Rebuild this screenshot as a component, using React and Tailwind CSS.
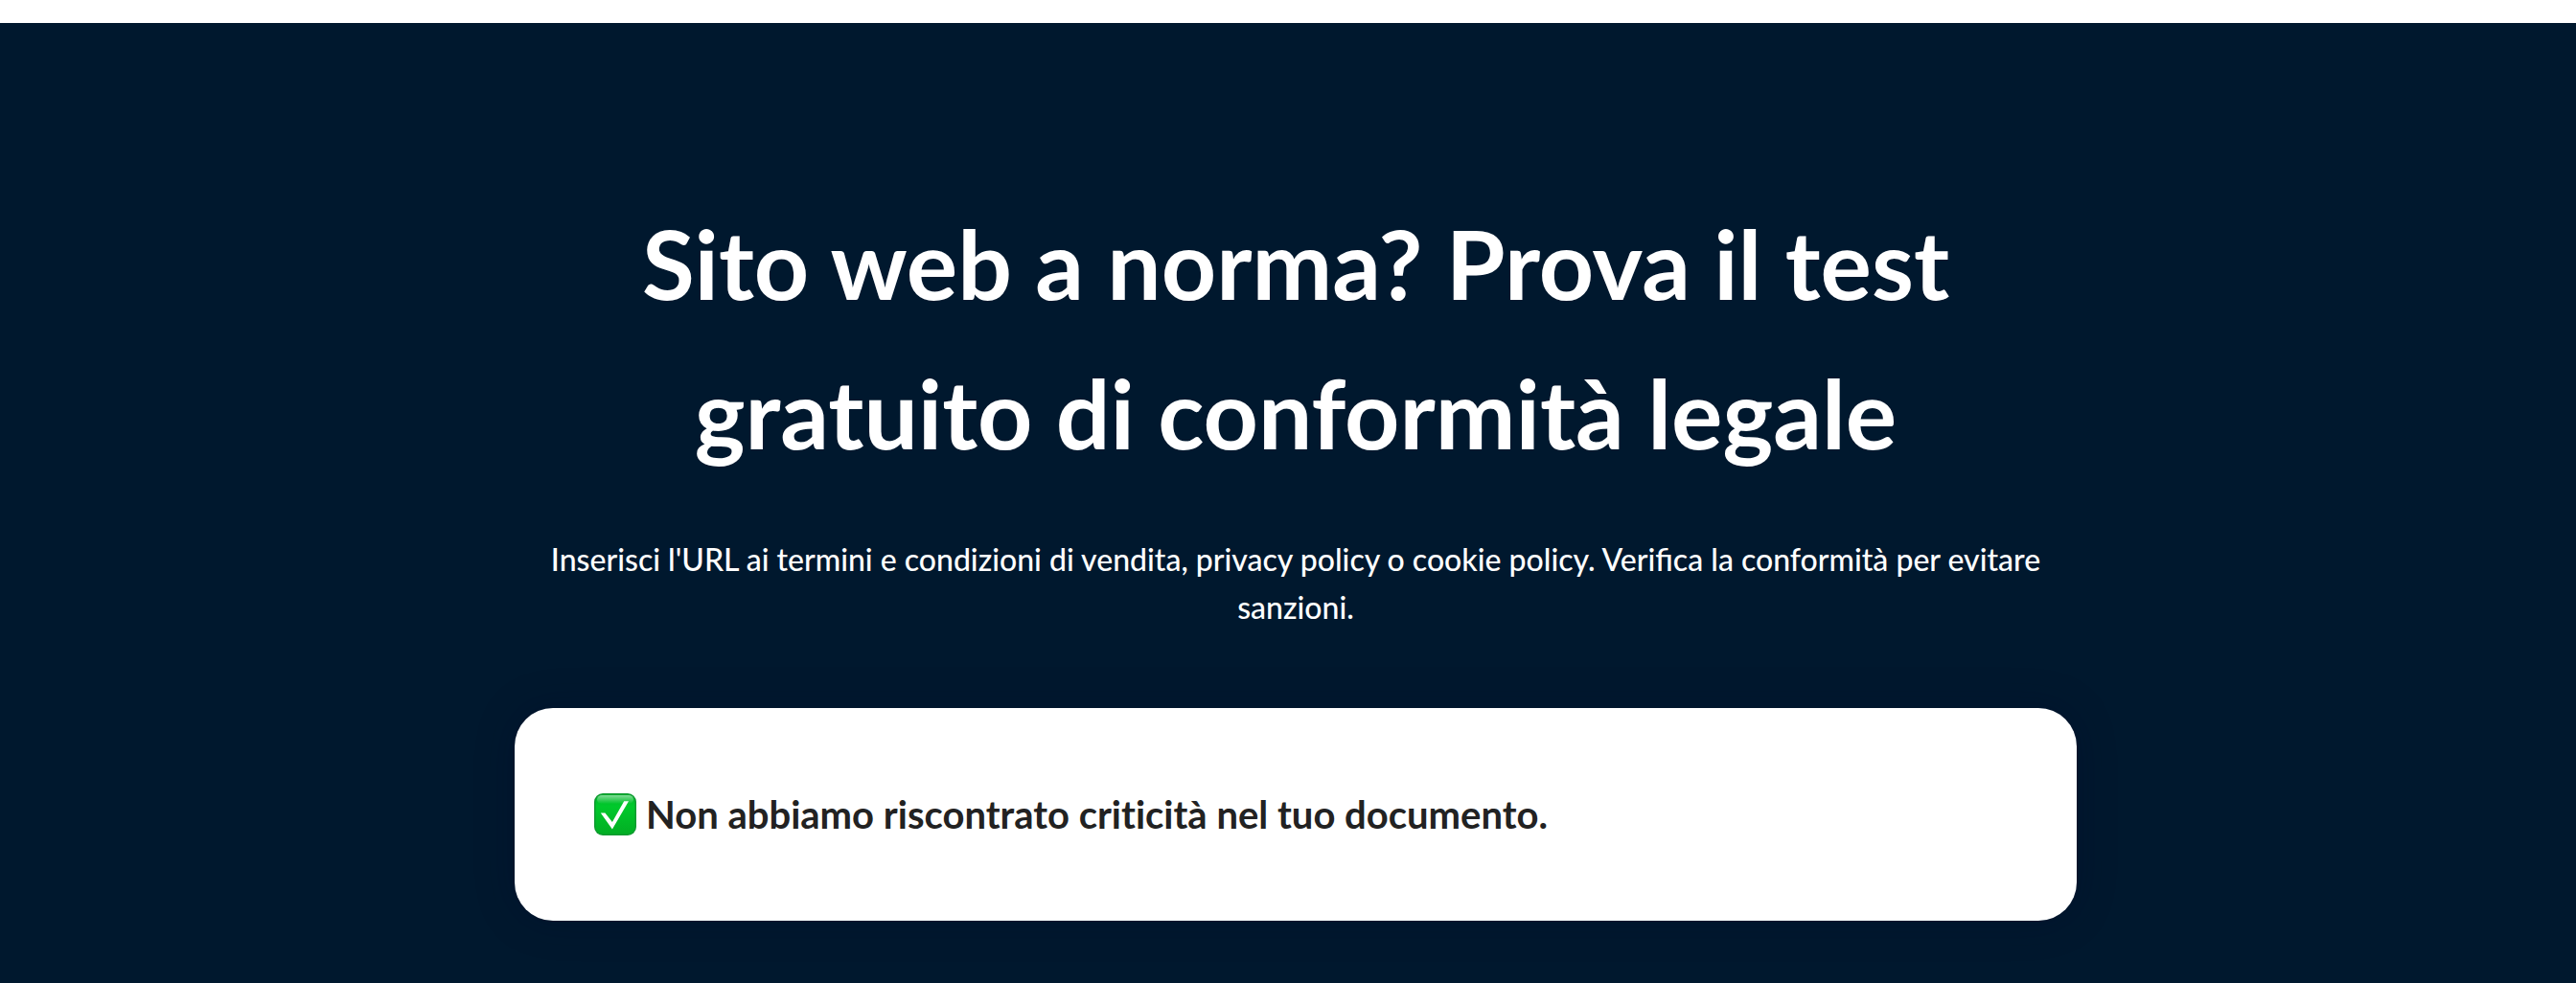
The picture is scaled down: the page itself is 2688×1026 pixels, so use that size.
function CheckMark() {
  return (
    <svg viewBox="0 0 44 44" className="size-11 shrink-0" aria-hidden="true">
      <defs>
        <linearGradient id="tile" x1="0" y1="0" x2="0" y2="1">
          <stop offset="0" stopColor="#00b72a" />
          <stop offset="0.3" stopColor="#00c92b" />
          <stop offset="1" stopColor="#02ae24" />
        </linearGradient>
        <linearGradient id="shine" x1="0" y1="0" x2="0" y2="1">
          <stop offset="0" stopColor="#fff" stopOpacity="0.5" />
          <stop offset="1" stopColor="#fff" stopOpacity="0" />
        </linearGradient>
      </defs>
      <rect width="44" height="44" rx="9" fill="#0e9a30" />
      <rect x="1.5" y="1.5" width="41" height="41" rx="7.5" fill="url(#tile)" />
      <rect x="3" y="2" width="38" height="9" rx="5" fill="url(#shine)" />
      <path d="M6.8 20.6h4.6L18.9 30 31.2 8.3H36L18.9 37.5z" fill="#fff" />
    </svg>
  )
}

export default function App() {
  return (
    <main className="flex min-h-screen flex-col bg-white pt-6 font-['Lato',sans-serif]">
      <section className="flex grow flex-col items-center bg-[#00182e] pt-[172px] pb-16 pl-4 text-center text-white">
        <h1 className="max-w-[1630px] text-[100px] leading-[156px] font-bold">
          Sito web a norma? Prova il test<br />gratuito di conformità legale
        </h1>
        <p className="mt-[51px] w-full max-w-[1630px] text-[32px] leading-[50px] font-medium">
          Inserisci l'URL ai termini e condizioni di vendita, privacy policy o cookie policy. Verifica la conformità per evitare sanzioni.
        </p>
        <div role="status" className="mt-20 flex w-full max-w-[1630px] items-center gap-2.5 rounded-[40px] bg-white px-[83px] py-20 text-left text-[#222] shadow-[0_0_40px_rgba(0,0,40,0.25)]">
          <CheckMark />
          <p className="text-[40px] leading-[62px] font-bold [font-variant-ligatures:none]">Non abbiamo riscontrato criticità nel tuo documento.</p>
        </div>
      </section>
    </main>
  )
}
